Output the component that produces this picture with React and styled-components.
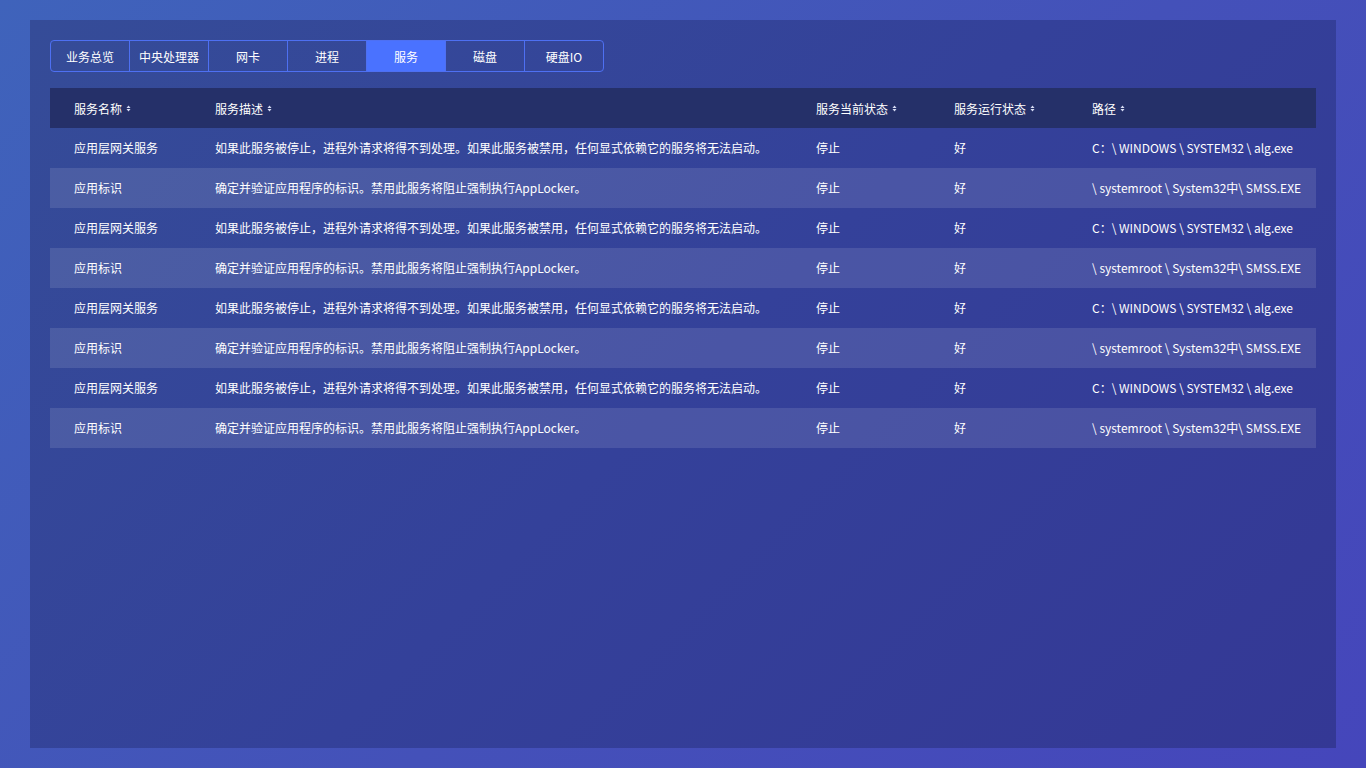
import React, { useState } from 'react'
import styled, { createGlobalStyle } from 'styled-components'

const GlobalStyle = createGlobalStyle`
    html, body {
        margin: 0;
        padding: 0;
    }
    body {
        width: 1366px;
        height: 768px;
        overflow: hidden;
        background: linear-gradient(135deg, #3f63bb 0%, #4451b9 55%, #4546bb 100%);
        font-family: "Noto Sans CJK SC", "Noto Sans", sans-serif;
        color: #fff;
    }
`

const tabs = ['业务总览', '中央处理器', '网卡', '进程', '服务', '磁盘', '硬盘IO']

const columns = [
    { title: '服务名称', width: 141 },
    { title: '服务描述', width: 601 },
    { title: '服务当前状态', width: 138 },
    { title: '服务运行状态', width: 138 },
    { title: '路径', width: 248 },
]

const rowA = ['应用层网关服务', '如果此服务被停止，进程外请求将得不到处理。如果此服务被禁用，任何显式依赖它的服务将无法启动。', '停止', '好', 'C：\\ WINDOWS \\ SYSTEM32 \\ alg.exe']
const rowB = ['应用标识', '确定并验证应用程序的标识。禁用此服务将阻止强制执行AppLocker。', '停止', '好', '\\ systemroot \\ System32中\\ SMSS.EXE']
const rows = [rowA, rowB, rowA, rowB, rowA, rowB, rowA, rowB]

function SortIcon() {
    return (
        <svg width="5" height="7" viewBox="0 0 5 7">
            <path d="M2.5 0.5 L4.5 3 L0.5 3 Z" fill="#d8def5" />
            <path d="M2.5 6.5 L4.5 4 L0.5 4 Z" fill="#d8def5" />
        </svg>
    )
}

function App() {
    const [active, setActive] = useState(4)

    return (
        <>
            <GlobalStyle />
            <Page>
                <Panel>
                    <Tabs>
                        {tabs.map((t, i) => (
                            <Tab key={t} active={i === active} onClick={() => setActive(i)}>{t}</Tab>
                        ))}
                    </Tabs>
                    <Table>
                        <colgroup>
                            {columns.map(c => <col key={c.title} style={{ width: c.width }} />)}
                        </colgroup>
                        <thead>
                            <tr>
                                {columns.map(c => (
                                    <Th key={c.title}>
                                        <span>{c.title}</span>
                                        <SortIcon />
                                    </Th>
                                ))}
                            </tr>
                        </thead>
                        <tbody>
                            {rows.map((r, i) => (
                                <Row key={i} striped={i % 2 === 1}>
                                    {r.map((cell, j) => <Td key={j}>{cell}</Td>)}
                                </Row>
                            ))}
                        </tbody>
                    </Table>
                </Panel>
            </Page>
        </>
    )
}

export default App

const Page = styled.div`
    padding: 20px 30px;
    height: 768px;
    box-sizing: border-box;
`

const Panel = styled.div`
    height: 728px;
    box-sizing: border-box;
    padding: 20px;
    background: linear-gradient(135deg, #354c98 0%, #34419a 50%, #343895 100%);
`

const Tabs = styled.div`
    display: flex;
    width: max-content;
    border: 1px solid #4e70f2;
    border-radius: 4px;
    overflow: hidden;
    margin-bottom: 16px;
`

const Tab = styled.div`
    width: 78px;
    height: 30px;
    display: flex;
    align-items: center;
    justify-content: center;
    font-size: 12px;
    color: #fff;
    cursor: pointer;
    background: ${({ active }) => (active ? '#4a72ff' : 'transparent')};
    border-left: 1px solid #4e70f2;
    &:first-child {
        border-left: none;
    }
`

const Table = styled.table`
    width: 1266px;
    border-collapse: collapse;
    table-layout: fixed;
    font-size: 12px;
`

const Th = styled.th`
    height: 40px;
    box-sizing: border-box;
    padding: 0 0 2px 24px;
    text-align: left;
    font-weight: normal;
    background: #253069;
    white-space: nowrap;
    span {
        margin-right: 4px;
        vertical-align: middle;
    }
    svg {
        vertical-align: middle;
    }
`

const Row = styled.tr`
    background: ${({ striped }) => (striped ? 'rgba(255, 255, 255, 0.11)' : 'transparent')};
`

const Td = styled.td`
    height: 40px;
    box-sizing: border-box;
    padding: 0 0 1px 24px;
    white-space: nowrap;
    overflow: visible;
`
